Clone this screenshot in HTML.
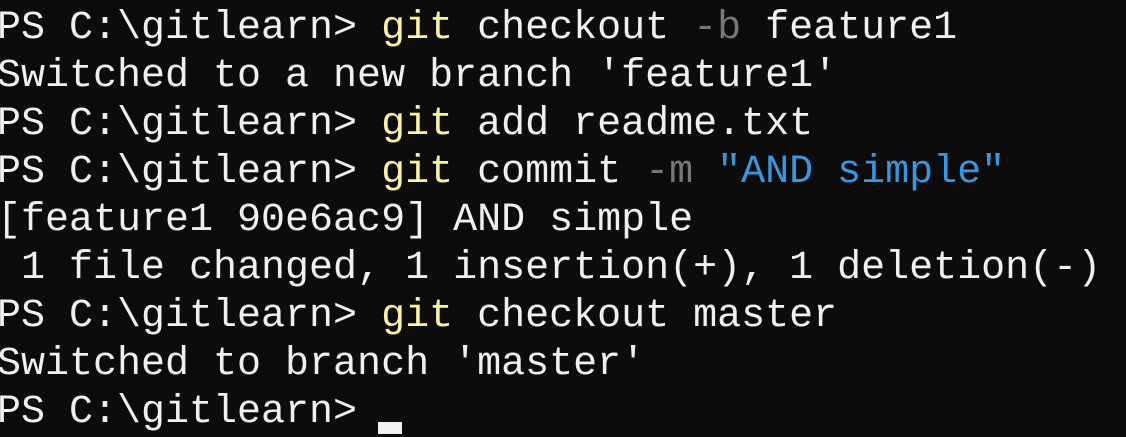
<!DOCTYPE html>
<html><head><style>
html,body{margin:0;padding:0;background:#0c0c0c;width:1126px;height:434px;overflow:hidden}
pre{margin:0;position:absolute;left:-3px;top:5px;font-family:"Liberation Mono",monospace;font-size:40px;line-height:48px;color:#f0f0f0;white-space:pre}
.y{color:#f9f1a5}.g{color:#767676}.b{color:#3a96dd}
.cur{position:absolute;left:378px;top:422px;width:24px;height:12px;background:#f0f0f0}
</style></head><body>
<pre>PS C:\gitlearn&gt; <span class="y">git</span> checkout <span class="g">-b</span> feature1
Switched to a new branch 'feature1'
PS C:\gitlearn&gt; <span class="y">git</span> add readme.txt
PS C:\gitlearn&gt; <span class="y">git</span> commit <span class="g">-m</span> <span class="b">"AND simple"</span>
[feature1 90e6ac9] AND simple
 1 file changed, 1 insertion(+), 1 deletion(-)
PS C:\gitlearn&gt; <span class="y">git</span> checkout master
Switched to branch 'master'
PS C:\gitlearn&gt;</pre>
<div class="cur"></div>
</body></html>
